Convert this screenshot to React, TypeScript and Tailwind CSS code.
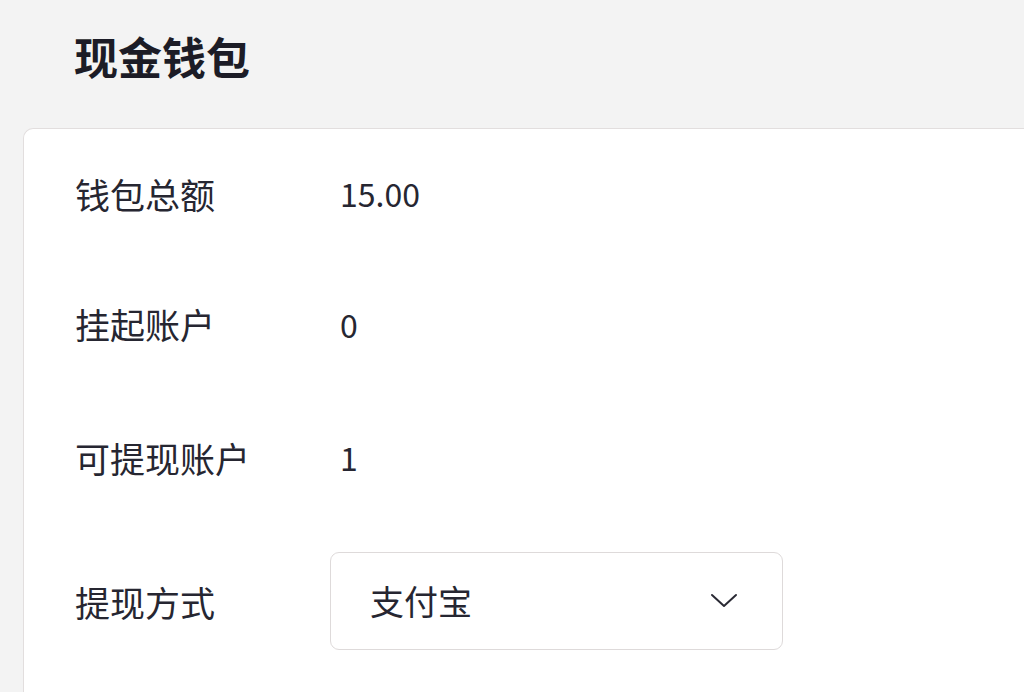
import React from "react";

const rows = [
  { label: "钱包总额", value: "15.00", h: "h-[128px]" },
  { label: "挂起账户", value: "0", h: "h-[133px]" },
  { label: "可提现账户", value: "1", h: "h-[134px]" },
];

export default function App() {
  return (
    <div
      className="h-[692px] w-[1024px] overflow-hidden bg-[#f3f3f3] text-[#262631]"
      style={{ fontFamily: '"Noto Sans CJK SC", "Noto Sans", sans-serif' }}
    >
      {/* Page title */}
      <div className="flex h-[128px] items-start pl-[74px] pt-[26px]">
        <h1 className="text-[44px] font-bold leading-[60px] text-[#1c1c26]">现金钱包</h1>
      </div>

      {/* Card */}
      <div className="ml-[23px] h-[600px] rounded-tl-[10px] border border-r-0 border-b-0 border-[#e2dede] bg-white pl-[51px]">
        {rows.map((r) => (
          <div key={r.label} className={`flex items-center ${r.h}`}>
            <span className="w-[265px] text-[35px] leading-none">{r.label}</span>
            <span className="text-[32px] leading-none">{r.value}</span>
          </div>
        ))}

        <div className="flex h-[154px] items-center">
          <span className="w-[255px] text-[35px] leading-none">提现方式</span>
          <button className="flex h-[98px] w-[453px] items-center justify-between rounded-[9px] border border-[#dedada] bg-white pl-[39px] pr-[44px]">
            <span className="text-[34px] leading-none">支付宝</span>
            <svg width="28" height="16" viewBox="0 0 28 16" fill="none">
              <path d="M2 2 L14 13 L26 2" stroke="#2a2a34" strokeWidth="2" strokeLinecap="round" strokeLinejoin="round" />
            </svg>
          </button>
        </div>
      </div>
    </div>
  );
}
